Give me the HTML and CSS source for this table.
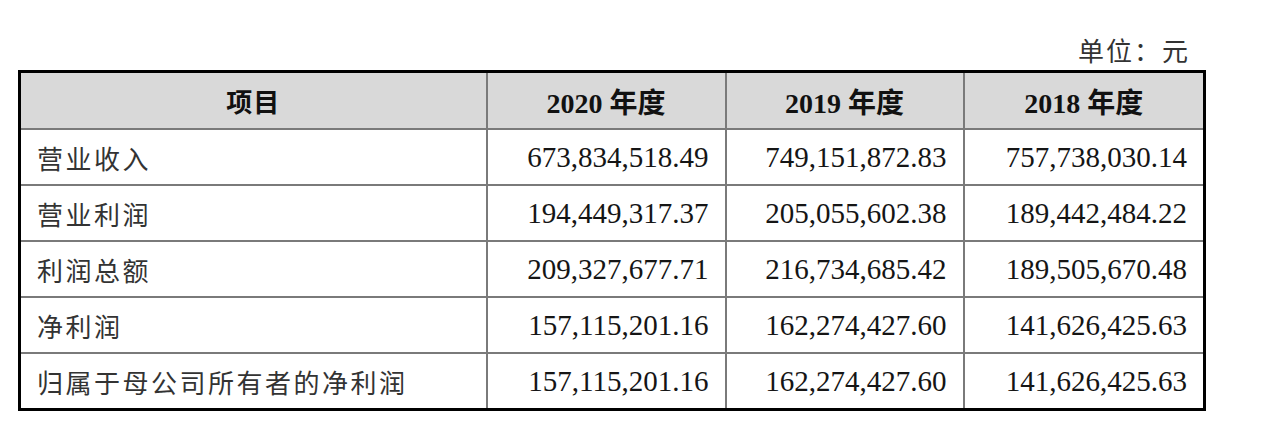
FILE: index.html
```html
<!DOCTYPE html>
<html lang="zh-CN">
<head>
<meta charset="utf-8">
<title>财务数据</title>
<link rel="stylesheet" href="styles.css">
</head>
<body>
<div class="page">
  <div class="unit">单位：元</div>
  <table class="fin">
    <colgroup>
      <col class="c1"><col class="c2"><col class="c3"><col class="c4">
    </colgroup>
    <thead>
      <tr>
        <th class="hcn">项目</th>
        <th>2020 年度</th>
        <th>2019 年度</th>
        <th>2018 年度</th>
      </tr>
    </thead>
    <tbody>
      <tr><td class="label">营业收入</td><td class="num">673,834,518.49</td><td class="num">749,151,872.83</td><td class="num">757,738,030.14</td></tr>
      <tr><td class="label">营业利润</td><td class="num">194,449,317.37</td><td class="num">205,055,602.38</td><td class="num">189,442,484.22</td></tr>
      <tr><td class="label">利润总额</td><td class="num">209,327,677.71</td><td class="num">216,734,685.42</td><td class="num">189,505,670.48</td></tr>
      <tr><td class="label">净利润</td><td class="num">157,115,201.16</td><td class="num">162,274,427.60</td><td class="num">141,626,425.63</td></tr>
      <tr><td class="label">归属于母公司所有者的净利润</td><td class="num">157,115,201.16</td><td class="num">162,274,427.60</td><td class="num">141,626,425.63</td></tr>
    </tbody>
  </table>
</div>
</body>
</html>
```

FILE: styles.css
```css
html, body {
  margin: 0;
  padding: 0;
  background: #ffffff;
}

.page {
  padding: 30px 0 0 18px;
  width: 1186px;
}

.unit {
  height: 40px;
  line-height: 40px;
  text-align: right;
  padding-right: 14px;
  font-family: "Noto Sans CJK SC", sans-serif;
  font-size: 26px;
  letter-spacing: 2px;
  color: #333333;
}

.fin {
  border-collapse: collapse;
  table-layout: fixed;
  width: 1185px;
  border: 3px solid #000000;
}

.c1 { width: 467px; }
.c2 { width: 239px; }
.c3 { width: 238px; }
.c4 { width: 241px; }

.fin th,
.fin td {
  border: 2px solid #7a7a7a;
  padding: 0;
  vertical-align: middle;
}

.fin th {
  background: #d9d9d9;
  height: 55px;
  text-align: center;
  font-family: "Liberation Serif", "Noto Sans CJK SC", serif;
  font-weight: bold;
  font-size: 28px;
  color: #111111;
}

.fin th.hcn {
  font-family: "Noto Sans CJK SC", sans-serif;
  font-size: 26px;
  letter-spacing: 1px;
}

.fin td {
  height: 54px;
}

.label {
  padding-left: 16px !important;
  font-family: "Noto Sans CJK SC", sans-serif;
  font-size: 26px;
  letter-spacing: 2.5px;
  color: #333333;
  white-space: nowrap;
}

.num {
  text-align: right;
  padding-right: 16px !important;
  font-family: "Liberation Serif", serif;
  font-size: 29px;
  color: #151515;
  white-space: nowrap;
}
```
